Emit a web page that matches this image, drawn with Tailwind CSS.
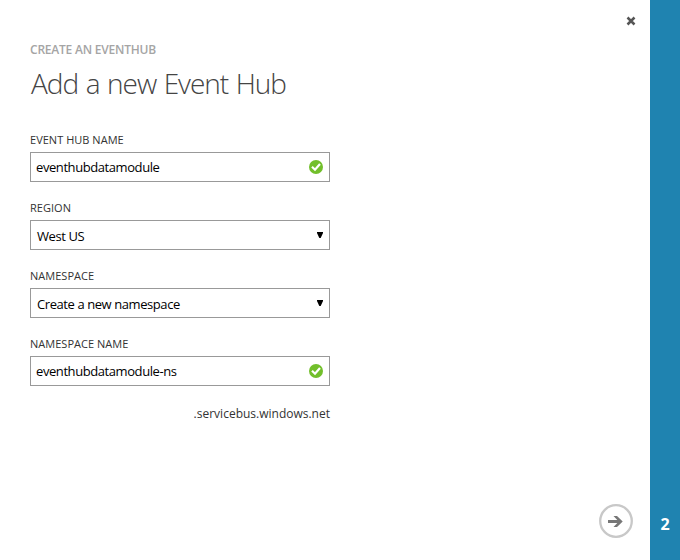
<!DOCTYPE html>
<html lang="en">
<head>
<meta charset="utf-8">
<title>Add a new Event Hub</title>
<script src="https://cdn.jsdelivr.net/npm/@tailwindcss/browser@4"></script>
</head>
<body class="flex h-[560px] w-[680px] overflow-hidden bg-white font-['Open_Sans','Noto_Sans',sans-serif] text-[#333]">
<main class="flex flex-1 justify-between">
  <form class="w-[330px] pl-[30px] pt-[42px] whitespace-nowrap">
    <p class="h-4 text-[12px] leading-4 font-semibold tracking-[-0.22px] text-[#a5a5a5]">CREATE AN EVENTHUB</p>
    <h1 class="mt-[5px] h-10 pl-px text-[28px] leading-10 font-light tracking-[-1.02px] [word-spacing:1.3px] text-[#444]">Add a new Event Hub</h1>
    <div class="mt-[29px]">
      <label class="block h-4 text-[11px] leading-4 tracking-[0.03px]">EVENT HUB NAME</label>
      <div class="mt-1 flex h-[30px] items-center justify-between border border-[#999] pr-[6px] pl-[5px] text-[13px] tracking-[-0.42px] text-black">
        <span class="pt-[2px]">eventhubdatamodule</span>
        <svg class="size-[14px]" viewBox="0 0 14 14"><circle cx="7" cy="7" r="7" fill="#72bf2b"/><path d="M3 6.7L6 9.7L11 4" fill="none" stroke="#fff" stroke-width="2.2"/></svg>
      </div>
    </div>
    <div class="mt-[18px]">
      <label class="block h-4 text-[11px] leading-4 tracking-[0.03px]">REGION</label>
      <div class="mt-1 flex h-[30px] items-center justify-between border border-[#999] pr-[6px] pl-[6px] text-[13px] tracking-[-0.42px] text-black">
        <span class="pt-[4px]">West US</span>
        <svg class="h-[6px] w-[6px]" viewBox="0 0 6 6"><path d="M0 0H6V1L3.7 6H2.3L0 1Z" fill="#000"/></svg>
      </div>
    </div>
    <div class="mt-[18px]">
      <label class="block h-4 text-[11px] leading-4 tracking-[0.03px]">NAMESPACE</label>
      <div class="mt-1 flex h-[30px] items-center justify-between border border-[#999] pr-[6px] pl-[6px] text-[13px] tracking-[-0.42px] text-black">
        <span class="pt-[4px]">Create a new namespace</span>
        <svg class="h-[6px] w-[6px]" viewBox="0 0 6 6"><path d="M0 0H6V1L3.7 6H2.3L0 1Z" fill="#000"/></svg>
      </div>
    </div>
    <div class="mt-[18px]">
      <label class="block h-4 text-[11px] leading-4 tracking-[0.03px]">NAMESPACE NAME</label>
      <div class="mt-1 flex h-[30px] items-center justify-between border border-[#999] pr-[6px] pl-[5px] text-[13px] tracking-[-0.42px] text-black">
        <span class="pt-[2px]">eventhubdatamodule-ns</span>
        <svg class="size-[14px]" viewBox="0 0 14 14"><circle cx="7" cy="7" r="7" fill="#72bf2b"/><path d="M3 6.7L6 9.7L11 4" fill="none" stroke="#fff" stroke-width="2.2"/></svg>
      </div>
    </div>
    <p class="mt-[18px] text-right text-[12px] leading-5">.servicebus.windows.net</p>
  </form>
  <div class="flex flex-col items-end justify-between pt-4 pr-[14px] pb-[22px]">
    <svg class="h-[10px] w-[10px]" viewBox="0 0 10 10"><path d="M1.5 1.5L8.5 8.5M8.5 1.5L1.5 8.5" stroke="#555" stroke-width="2.5"/></svg>
    <svg class="mr-[3px] size-[34px]" viewBox="0 0 34 34"><circle cx="17" cy="17" r="15.8" fill="none" stroke="#c8c8c8" stroke-width="2.3"/><path d="M9 16H18.3L14.5 12H18L23.7 17.4L18 23H14.5L18.3 19H9Z" fill="#777"/></svg>
  </div>
</main>
<aside class="flex w-[30px] items-end justify-center bg-[#1f83b0] pb-[24px] text-[16px] leading-6 font-bold text-white">2</aside>
</body>
</html>
